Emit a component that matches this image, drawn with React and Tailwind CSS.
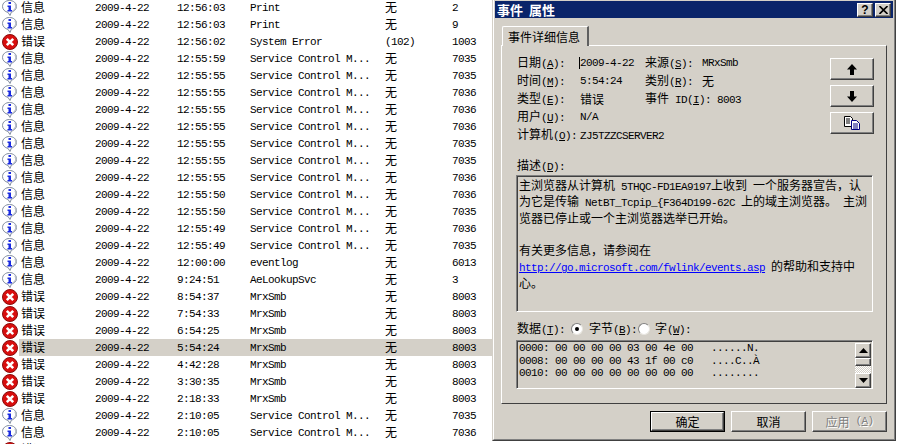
import React from 'react';

const SCM = 'Service Control M...';

const rows = [
  ['i', '12:56:03', 'Print', '无', '2'],
  ['i', '12:56:03', 'Print', '无', '9'],
  ['e', '12:56:02', 'System Error', '(102)', '1003'],
  ['i', '12:55:59', SCM, '无', '7035'],
  ['i', '12:55:55', SCM, '无', '7035'],
  ['i', '12:55:55', SCM, '无', '7036'],
  ['i', '12:55:55', SCM, '无', '7036'],
  ['i', '12:55:55', SCM, '无', '7036'],
  ['i', '12:55:55', SCM, '无', '7035'],
  ['i', '12:55:55', SCM, '无', '7035'],
  ['i', '12:55:55', SCM, '无', '7036'],
  ['i', '12:55:50', SCM, '无', '7036'],
  ['i', '12:55:50', SCM, '无', '7035'],
  ['i', '12:55:49', SCM, '无', '7036'],
  ['i', '12:55:49', SCM, '无', '7035'],
  ['i', '12:00:00', 'eventlog', '无', '6013'],
  ['i', '9:24:51', 'AeLookupSvc', '无', '3'],
  ['e', '8:54:37', 'MrxSmb', '无', '8003'],
  ['e', '7:54:33', 'MrxSmb', '无', '8003'],
  ['e', '6:54:25', 'MrxSmb', '无', '8003'],
  ['e', '5:54:24', 'MrxSmb', '无', '8003'],
  ['e', '4:42:28', 'MrxSmb', '无', '8003'],
  ['e', '3:30:35', 'MrxSmb', '无', '8003'],
  ['e', '2:18:33', 'MrxSmb', '无', '8003'],
  ['i', '2:10:05', SCM, '无', '7035'],
  ['i', '2:10:05', SCM, '无', '7036'],
  // cut off by the bottom of the window, only the icon and the type show
  ['e', '', '', '', ''],
];

const raised = 'border border-t-white border-l-white border-r-[#404040] border-b-[#404040] shadow-[inset_-1px_-1px_0_#808080]';
const sunken = 'border border-t-[#808080] border-l-[#808080] border-r-white border-b-white shadow-[inset_1px_1px_0_#404040]';

// latin text is 6px wide per char like the original bitmap font, cjk stays 12px
const Lat = ({ children }) => (
  <span className="font-['Liberation_Mono',monospace] text-[11px] tracking-[-0.6px] whitespace-pre">{children}</span>
);

const T = ({ text }) => (
  <>
    {text.split(/([\x00-\xff]+)/).filter(Boolean).map((part, i) =>
      /[\x00-\xff]/.test(part) ? <Lat key={i}>{part}</Lat> : <span key={i}>{part}</span>
    )}
  </>
);

const Label = ({ zh, k }) => (
  <span className="whitespace-pre">
    {zh}
    <Lat>(<u>{k}</u>):</Lat>
  </span>
);

const InfoIcon = () => (
  <svg width="16" height="16" viewBox="0 0 16 16">
    <path d="M7.5 .5C3.6 .5 .5 3 .5 6.5c0 3 2.6 5.3 5.5 5.9L8 15.5l1.3-3.3c3-.8 5.2-2.9 5.2-5.7C14.500 3 11.400 .5 7.500 .5z" fill="#fff" stroke="#7f8a9c" />
    <path d="M13 3.500c1.300 2.500 1 6-2.500 8" fill="none" stroke="#b9bfc9" strokeWidth="1.500" />
    <rect x="6.500" y="2" width="2.500" height="2" fill="#1a2be0" />
    <path d="M5.500 5.500H9V10h1v1.500H5.500V10h1V7h-1z" fill="#1a2be0" />
  </svg>
);

const ErrorIcon = () => (
  <svg width="16" height="16" viewBox="0 0 16 16">
    <circle cx="8" cy="8" r="7.500" fill="#d80e0e" stroke="#8a0c0c" />
    <path d="M4.800 4.800l6.400 6.400M11.200 4.800l-6.400 6.400" stroke="#fff" strokeWidth="2.600" />
  </svg>
);

const Row = ({ row, selected }) => {
  const [kind, time, source, category, id] = row;
  return (
    <div className="flex h-[17px]">
      <div className="w-[19px] pl-[2px] shrink-0 flex items-center">
        {kind === 'i' ? <InfoIcon /> : <ErrorIcon />}
      </div>
      <div className={`flex-1 grid grid-cols-[76px_82px_73px_135px_67px_1fr] items-center leading-[12px] ${selected ? 'bg-[#d4d0c8]' : ''}`}>
        <span className="pl-[2px] -translate-y-px">{kind === 'i' ? '信息' : '错误'}</span>
        {time ? <Lat>2009-4-22</Lat> : <span />}
        <Lat>{time}</Lat>
        <Lat>{source}</Lat>
        <span className="-translate-y-px"><T text={category} /></span>
        <Lat>{id}</Lat>
      </div>
    </div>
  );
};

const ArrowIcon = ({ down }) => (
  <svg width="10" height="11" viewBox="0 0 10 11" className={down ? 'rotate-180' : ''}>
    <path d="M5 0l5 5.500H7V11H3V5.500H0z" fill="#000" />
  </svg>
);

const CopyIcon = () => (
  <svg width="16" height="14" viewBox="0 0 16 14">
    <path d="M.5 .5h6l2 2v8H.5z" fill="#fff" stroke="#000" />
    <path d="M2 3h4M2 5h4M2 7h4" stroke="#000" />
    <path d="M7.500 4.500h5l3 3v6h-8z" fill="#fff" stroke="#000080" />
    <path d="M9 8h5M9 10h5M9 12h5" stroke="#000080" />
  </svg>
);

const Radio = ({ checked }) => (
  <span className="w-[12px] h-[12px] rounded-full bg-white border border-t-[#808080] border-l-[#808080] border-r-[#e8e6e0] border-b-[#e8e6e0] flex items-center justify-center">
    {checked && <span className="w-[4px] h-[4px] rounded-full bg-black" />}
  </span>
);

const Triangle = ({ down }) => (
  <svg width="9" height="5" viewBox="0 0 9 5" className={down ? 'rotate-180' : ''}>
    <path d="M4.500 0L9 5H0z" fill="#000" />
  </svg>
);

const Scrollbar = () => (
  <div className="w-[16px] h-[45px] flex flex-col mt-px">
    <div className={`${raised} bg-[#d4d0c8] h-[15px] flex items-center justify-center`}><Triangle /></div>
    <div className={`${raised} bg-[#d4d0c8] h-[8px]`} />
    <div className="flex-1 bg-[repeating-conic-gradient(#fff_0_25%,#d4d0c8_0_50%)] bg-[length:2px_2px]" />
    <div className={`${raised} bg-[#d4d0c8] h-[15px] flex items-center justify-center`}><Triangle down /></div>
  </div>
);

const Dialog = () => (
  <div className="w-[404px] h-[441px] shrink-0 bg-[#d4d0c8] border-l border-r border-b border-l-[#d4d0c8] border-r-[#404040] border-b-[#404040]">
    <div className="h-full border-l border-r border-b border-l-white border-r-[#808080] border-b-[#808080] px-px pt-px">
      <div className="h-[17px] bg-[#0a246a] flex items-center justify-between pl-[2px] pr-[2px]">
        <span className="text-white font-bold text-[13px] leading-[17px] whitespace-pre">事件  属性</span>
        <div className="flex gap-[2px]">
          <div className={`${raised} w-[16px] h-[14px] bg-[#d4d0c8] flex items-center justify-center font-bold text-[12px] leading-none font-['Liberation_Sans',sans-serif]`}>?</div>
          <div className={`${raised} w-[16px] h-[14px] bg-[#d4d0c8] flex items-center justify-center`}>
            <svg width="9" height="8" viewBox="0 0 9 8"><path d="M.5 0L8.500 8M8.500 0L.5 8" stroke="#000" strokeWidth="1.600" /></svg>
          </div>
        </div>
      </div>

      <div className="ml-[6px] mt-[8px] w-[386px]">
        <div className="ml-px w-[87px] h-[20px] -mb-px relative bg-[#d4d0c8] border-t border-l border-t-white border-l-white border-r-2 border-r-[#606060] rounded-tl-[2px] flex items-center pl-[5px]">
          事件详细信息
        </div>
        <div className="h-[359px] border border-t-white border-l-white border-r-[#404040] border-b-[#404040] pl-[15px] pr-[12px] pt-[8px]">
          <div className="flex justify-between">
            <div className="grid grid-cols-[63px_65px_57px_auto] auto-rows-[18px] items-center w-[240px]">
              <Label zh="日期" k="A" />
              <span className="border-l border-black -ml-px h-[12px] flex items-center w-fit"><Lat>2009-4-22</Lat></span>
              <Label zh="来源" k="S" />
              <Lat>MRxSmb</Lat>
              <Label zh="时间" k="M" />
              <Lat>5:54:24</Lat>
              <Label zh="类别" k="R" />
              <span>无</span>
              <Label zh="类型" k="E" />
              <span>错误</span>
              <span className="col-span-2 whitespace-pre">事件<Lat> ID(<u>I</u>): 8003</Lat></span>
              <Label zh="用户" k="U" />
              <Lat>N/A</Lat>
              <span className="col-span-2" />
              <Label zh="计算机" k="O" />
              <span className="col-span-3"><Lat>ZJ5TZZCSERVER2</Lat></span>
            </div>
            <div className="mt-[4px] flex flex-col gap-[5px]">
              <div className={`${raised} w-[44px] h-[22px] flex items-center justify-center`}><ArrowIcon /></div>
              <div className={`${raised} w-[44px] h-[22px] flex items-center justify-center`}><ArrowIcon down /></div>
              <div className={`${raised} w-[44px] h-[22px] flex items-center justify-center`}><CopyIcon /></div>
            </div>
          </div>

          <div className="mt-[13px] h-[16px] leading-[16px]"><Label zh="描述" k="D" /></div>
          <div className={`${sunken} -ml-px mt-[2px] w-[357px] h-[137px] pl-[2px] pt-px leading-[16.3px] whitespace-pre *:h-[16.3px]`}>
            <div><T text="主浏览器从计算机 5THQC-FD1EA9197上收到 一个服务器宣告，认" /></div>
            <div><T text="为它是传输 NetBT_Tcpip_{F364D199-62C 上的域主浏览器。 主浏" /></div>
            <div>览器已停止或一个主浏览器选举已开始。</div>
            <div>&nbsp;</div>
            <div>有关更多信息，请参阅在</div>
            <div>
              <a className="text-[#0000ff] underline"><Lat>http://go.microsoft.com/fwlink/events.asp</Lat></a>
              <Lat> </Lat>的帮助和支持中
            </div>
            <div>心。</div>
          </div>

          <div className="mt-[9px] h-[16px] flex items-center">
            <span className="w-[54px]"><Label zh="数据" k="T" /></span>
            <Radio checked />
            <span className="ml-[6px] w-[49px]"><Label zh="字节" k="B" /></span>
            <Radio />
            <span className="ml-[5px]"><Label zh="字" k="W" /></span>
          </div>
          <div className={`${sunken} -ml-px mt-[3px] w-[357px] h-[49px] pl-[2px] pr-px pt-[1px] flex justify-between`}>
            <div className="*:h-[12.5px] *:flex *:items-center">
              <div><Lat>0000: 00 00 00 00 03 00 4e 00   ......N.</Lat></div>
              <div><Lat>0008: 00 00 00 00 43 1f 00 c0   ....C..À</Lat></div>
              <div><Lat>0010: 00 00 00 00 00 00 00 00   ........</Lat></div>
            </div>
            <Scrollbar />
          </div>
        </div>
      </div>

      <div className="mt-[7px] ml-[155px] flex gap-[6px]">
        <div className="w-[75px] h-[21px] border border-black">
          <div className={`${raised} h-full flex items-center justify-center`}>确定</div>
        </div>
        <div className={`${raised} w-[75px] h-[21px] flex items-center justify-center`}>取消</div>
        <div className={`${raised} w-[75px] h-[21px] flex items-center justify-center text-[#808080] [text-shadow:1px_1px_0_#fff]`}>
          应用<Lat> (<u>A</u>)</Lat>
        </div>
      </div>
    </div>
  </div>
);

const App = () => {
  return (
    <div className="w-[899px] h-[444px] overflow-hidden bg-white flex items-start text-black text-[12px] font-['Noto_Sans_CJK_SC',sans-serif]">
      <div className="w-[492px] shrink-0 -mt-px">
        {rows.map((row, i) => (
          <Row key={i} row={row} selected={i === 20} />
        ))}
      </div>
      <Dialog />
    </div>
  );
};

export default App;
